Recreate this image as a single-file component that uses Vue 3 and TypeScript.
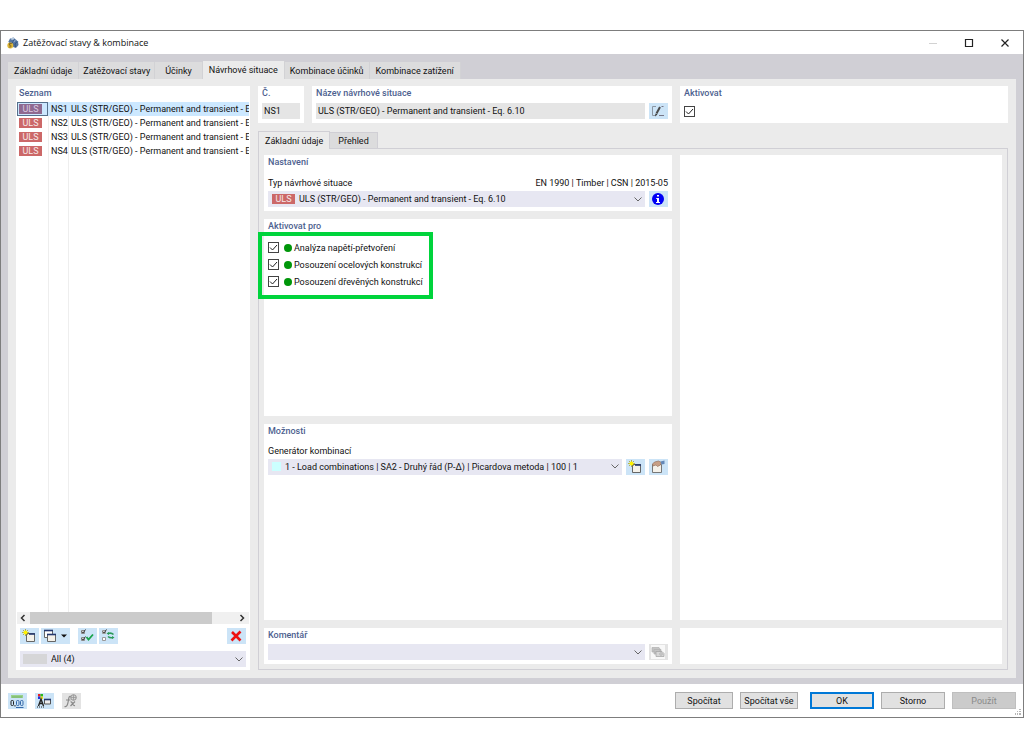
<script setup lang="ts">
import { ref } from 'vue'

interface Situation {
  id: string
  name: string
}

const tabs = ['Základní údaje', 'Zatěžovací stavy', 'Účinky', 'Návrhové situace', 'Kombinace účinků', 'Kombinace zatížení']
const activeTab = ref(3)
const innerTabs = ['Základní údaje', 'Přehled']
const activeInner = ref(0)

const base = 'ULS (STR/GEO) - Permanent and transient - Eq. 6.10'
const situations: Situation[] = ['NS1', 'NS2', 'NS3', 'NS4'].map((id) => ({ id, name: base.slice(0, 43) }))
const selected = ref('NS1')

const active = ref(true)
const designs = ref([
  { label: 'Analýza napětí-přetvoření', on: true },
  { label: 'Posouzení ocelových konstrukcí', on: true },
  { label: 'Posouzení dřevěných konstrukcí', on: true },
])
</script>

<template>
  <div class="desktop">
    <main class="window">
      <header class="titlebar">
        <svg class="app-icon" viewBox="0 0 12 12" aria-hidden="true">
          <path d="M1.500 4.500 3 1.500 6.500 .500 11 4.500 11.500 8 9.500 10.500 7 10.500 2.500 7z" fill="#54759f" />
          <path d="M3 1.500 6.500 .500 8 2 5 3z" fill="#b9cce2" />
          <path d="M7.500 2.500 5.500 5.500 6 9M10 4.500 8 7 8.500 10.500" fill="none" stroke="#2f4d7c" stroke-width=".900" />
          <path d="M8.500 2.800 6.700 5.200" stroke="#9db8d8" stroke-width=".900" />
          <circle cx="3.300" cy="8.400" r="3" fill="#dfb93a" />
          <path d="M4.800 6.600H2.400V8.200C4.800 7.900 4.900 10.200 2.200 10" fill="none" stroke="#75591a" stroke-width=".900" />
        </svg>
        <h1>Zatěžovací stavy &amp; kombinace</h1>
        <div class="caption">
          <button type="button" aria-label="Minimalizovat" disabled>
            <svg viewBox="0 0 10 10"><path d="M1 5.500H9" stroke="#d2d2d2" /></svg>
          </button>
          <button type="button" aria-label="Maximalizovat">
            <svg viewBox="0 0 10 10"><path d="M1.500 1.500H8.500V8.500H1.500z" fill="none" stroke="#222" stroke-width="1.200" /></svg>
          </button>
          <button type="button" aria-label="Zavřít">
            <svg viewBox="0 0 10 10"><path d="M1.500 1.500 8.500 8.500M8.500 1.500 1.500 8.500" stroke="#222" stroke-width="1.200" /></svg>
          </button>
        </div>
      </header>

      <section class="body">
        <div class="tabs" role="tablist">
          <button
            v-for="(t, i) in tabs" :key="t" type="button" role="tab"
            :aria-selected="i === activeTab" :class="{ on: i === activeTab }" @click="activeTab = i"
          >{{ t }}</button>
        </div>

        <div class="page">
          <aside class="panel list">
            <h2>Seznam</h2>
            <div class="rows">
              <table aria-label="Seznam">
                <tbody>
                  <tr v-for="s in situations" :key="s.id" :class="{ sel: s.id === selected }" @click="selected = s.id">
                    <td class="c-badge"><span class="badge">ULS</span></td>
                    <td class="c-id">{{ s.id }}</td>
                    <td class="c-name">{{ s.name }}</td>
                  </tr>
                </tbody>
              </table>
            </div>
            <div class="scroll">
              <svg viewBox="0 0 6 8"><path d="M4.500 1 1.500 4 4.500 7" fill="none" stroke="#333" stroke-width="1.500" /></svg>
              <div class="track"><div class="thumb"></div></div>
              <svg viewBox="0 0 6 8"><path d="M1.500 1 4.500 4 1.500 7" fill="none" stroke="#333" stroke-width="1.500" /></svg>
            </div>
            <div class="tools">
              <button type="button" class="tool" aria-label="Nový">
                <svg viewBox="0 0 14 14">
                  <path d="M4.500 4.500H12.500V12.500H4.500z" fill="#f4f1ea" stroke="#666" />
                  <path d="M7 5H13" stroke="#24386f" stroke-width="1.600" />
                  <path d="M3.500 0V7M0 3.500H7M1 1 6 6M6 1 1 6" stroke="#a89f2a" stroke-width=".800" />
                  <circle cx="3.500" cy="3.500" r="2" fill="#fff200" />
                </svg>
              </button>
              <button type="button" class="tool wide" aria-label="Kopírovat">
                <svg viewBox="0 0 14 14">
                  <path d="M1.500 1.500H9.500V8.500H1.500z" fill="#fff" stroke="#666" />
                  <path d="M1 1.500H10" stroke="#24386f" stroke-width="1.600" />
                  <path d="M4.500 5.500H12.500V12.500H4.500z" fill="#f4f1ea" stroke="#666" />
                  <path d="M4 5.500H13" stroke="#24386f" stroke-width="1.600" />
                </svg>
                <svg class="drop" viewBox="0 0 6 4"><path d="M0 .500H6L3 3.500z" fill="#111" /></svg>
              </button>
              <button type="button" class="tool gap" aria-label="Vybrat vše">
                <svg viewBox="0 0 14 14">
                  <path d="M1.500 1.500H4.500V4.500H1.500zM1.500 8.500H4.500V11.500H1.500z" fill="#fff" stroke="#888" />
                  <path d="M2 2.500 3 4 5.500 .500M2 9.500 3 11 5.500 7.500" fill="none" stroke="#333" />
                  <path d="M6.500 8 8.500 10.500 13 5.500" fill="none" stroke="#18a34a" stroke-width="1.800" />
                </svg>
              </button>
              <button type="button" class="tool" aria-label="Obrátit výběr">
                <svg viewBox="0 0 14 14">
                  <path d="M1.500 1.500H4.500V4.500H1.500zM1.500 8.500H4.500V11.500H1.500z" fill="#fff" stroke="#999" />
                  <path d="M2 2.500 3 4 5.500 .500" fill="none" stroke="#333" />
                  <path d="M5.500 4.500 8 3V6zM13.500 8.500 11 7V10z" fill="#2a9a58" />
                  <path d="M7 4.500C9 3.800 11 4 12.500 5.500M12 8.500C10.500 9 8.500 8.800 7 7.500" fill="none" stroke="#2a9a58" stroke-width="1.600" />
                </svg>
              </button>
              <button type="button" class="tool end" aria-label="Odstranit">
                <svg viewBox="0 0 14 14"><path d="M3 3 11.500 11.500M11.500 2.500 2.500 11.500" stroke="#ee1111" stroke-width="2.600" /></svg>
              </button>
            </div>
            <div class="combo filter">
              <span class="swatch"></span>
              <select aria-label="Filtr"><option>All (4)</option></select>
              <svg class="chev" viewBox="0 0 8 5"><path d="M.500 .500 4 4 7.500 .500" fill="none" stroke="#666" /></svg>
            </div>
          </aside>

          <div class="detail">
            <div class="head">
              <div class="head-left">
                <div class="panel num">
                  <label for="no">Č.</label>
                  <input id="no" type="text" readonly :value="selected" />
                </div>
                <div class="panel title">
                  <label for="nm">Název návrhové situace</label>
                  <div class="line">
                    <input id="nm" type="text" readonly :value="base" />
                    <button type="button" class="tool" aria-label="Upravit název">
                      <svg viewBox="0 0 14 14">
                        <path d="M5 2.500H1.500V11.500H4" fill="none" stroke="#8b96a3" />
                        <path d="M5.500 9.500 9 3" stroke="#4a4a4a" stroke-width="2" />
                        <path d="M4 12.500 4.500 9.500 6.500 10.500z" fill="#333" />
                        <path d="M8 11.500H13M10.500 2.500H12.500" stroke="#778" />
                      </svg>
                    </button>
                  </div>
                </div>
              </div>
              <div class="panel">
                <label for="act">Aktivovat</label>
                <span class="check solo">
                  <input id="act" v-model="active" type="checkbox" />
                  <svg v-show="active" viewBox="0 0 11 11"><path d="M2 5.500 4.500 8 9 3" fill="none" stroke="#222" /></svg>
                </span>
              </div>
            </div>

            <div class="inner-tabs" role="tablist">
              <button
                v-for="(t, i) in innerTabs" :key="t" type="button" role="tab"
                :aria-selected="i === activeInner" :class="{ on: i === activeInner }" @click="activeInner = i"
              >{{ t }}</button>
            </div>

            <div class="inner">
              <section class="panel settings">
                <h2>Nastavení</h2>
                <div class="caption-line">
                  <label for="type">Typ návrhové situace</label>
                  <span>EN 1990 | Timber | CSN | 2015-05</span>
                </div>
                <div class="line">
                  <div class="combo type">
                    <span class="badge">ULS</span>
                    <select id="type"><option>{{ base }}</option></select>
                    <svg class="chev" viewBox="0 0 8 5"><path d="M.500 .500 4 4 7.500 .500" fill="none" stroke="#666" /></svg>
                  </div>
                  <button type="button" class="tool" aria-label="Informace">
                    <svg viewBox="0 0 14 14">
                      <circle cx="7" cy="7" r="6" fill="#0000f5" />
                      <path d="M6 3H8V4.600H6zM5.200 6H8V10H9V11H5V10H6V7H5.200z" fill="#fff" />
                    </svg>
                  </button>
                </div>
              </section>

              <section class="panel designs">
                <h2>Aktivovat pro</h2>
                <ul>
                  <li v-for="(d, i) in designs" :key="d.label">
                    <span class="check">
                      <input :id="'d' + i" v-model="d.on" type="checkbox" />
                      <svg v-show="d.on" viewBox="0 0 11 11"><path d="M2 5.500 4.500 8 9 3" fill="none" stroke="#222" /></svg>
                    </span>
                    <span class="dot"></span>
                    <label :for="'d' + i">{{ d.label }}</label>
                  </li>
                </ul>
                <div class="highlight"></div>
              </section>

              <section class="panel options">
                <h2>Možnosti</h2>
                <div class="caption-line"><label for="gen">Generátor kombinací</label></div>
                <div class="line">
                  <div class="combo gen">
                    <span class="swatch"></span>
                    <select id="gen"><option>1 - Load combinations | SA2 - Druhý řád (P-Δ) | Picardova metoda | 100 | 1</option></select>
                    <svg class="chev" viewBox="0 0 8 5"><path d="M.500 .500 4 4 7.500 .500" fill="none" stroke="#666" /></svg>
                  </div>
                  <button type="button" class="tool" aria-label="Nový generátor">
                    <svg viewBox="0 0 14 14">
                      <path d="M4.500 4.500H12.500V12.500H4.500z" fill="#f4f1ea" stroke="#666" />
                      <path d="M7 5H13" stroke="#24386f" stroke-width="1.600" />
                      <path d="M3.500 0V7M0 3.500H7M1 1 6 6M6 1 1 6" stroke="#a89f2a" stroke-width=".800" />
                      <circle cx="3.500" cy="3.500" r="2" fill="#fff200" />
                    </svg>
                  </button>
                  <button type="button" class="tool" aria-label="Upravit generátor">
                    <svg viewBox="0 0 14 14">
                      <path d="M1.500 4.500H10.500V12.500H1.500z" fill="#f4f1ea" stroke="#777" />
                      <path d="M1.500 4 3.500 2 7.500 1 10.500 2.500 9.500 5 6.500 6.500 5 5 2 6z" fill="#c79f86" stroke="#8c6a58" stroke-width=".600" />
                      <path d="M9.500 1.500 13.500 .500V4L10.500 4.500z" fill="#6488b8" />
                    </svg>
                  </button>
                </div>
              </section>

              <section class="panel comment">
                <h2><label for="cm">Komentář</label></h2>
                <div class="line">
                  <div class="combo">
                    <select id="cm"><option></option></select>
                    <svg class="chev" viewBox="0 0 8 5"><path d="M.500 .500 4 4 7.500 .500" fill="none" stroke="#666" /></svg>
                  </div>
                  <button type="button" class="tool off" aria-label="Komentáře" disabled>
                    <svg viewBox="0 0 14 14">
                      <path d="M0 0H14V14H0z" fill="#f8f8f8" />
                      <path d="M1 2.500H8L9 4V7H1zM3 4.500H10V9H3z" fill="#c4c4c4" stroke="#b0b0b0" stroke-width=".700" />
                      <path d="M5 6.500H11L13 8.500V11.500H5z" fill="#d6d6d6" stroke="#a0a0a0" stroke-width=".700" />
                      <circle cx="10" cy="9" r="1.200" fill="#eee" stroke="#999" stroke-width=".700" />
                    </svg>
                  </button>
                </div>
              </section>

              <div class="panel side-main"></div>
              <div class="panel side-foot"></div>
            </div>
          </div>
        </div>
      </section>

      <footer class="footer">
        <button type="button" class="tool" aria-label="Jednotky">
          <svg viewBox="0 0 14 14">
            <path d="M1 1H13V4H1z" fill="#9ad28b" />
            <path d="M3 2V4M5 2V4M7 2V4M9 2V4M11 2V4" stroke="#5b9a50" stroke-width=".600" />
            <rect x="1" y="6.500" width="2.500" height="5" rx="1" fill="none" stroke="#222" />
            <path d="M5 11V12.500" stroke="#222" />
            <rect x="6.500" y="6.500" width="2.500" height="5" rx="1" fill="none" stroke="#3568a8" />
            <rect x="10.500" y="6.500" width="2.500" height="5" rx="1" fill="none" stroke="#3568a8" />
            <path d="M6 13.500H13.500" stroke="#3568a8" />
          </svg>
        </button>
        <button type="button" class="tool" aria-label="Zobrazení">
          <svg viewBox="0 0 14 14">
            <path d="M1 0H3.500V2.500H1z" fill="#e22" /><path d="M3.500 0H6V2.500H3.500z" fill="#2b2" />
            <path d="M1 2.500H3.500V5H1z" fill="#23d" /><path d="M3.500 2.500H6V5H3.500z" fill="#ed2" />
            <path d="M1.500 12 4 5 6.500 12M2.500 9.500H5.500" fill="none" stroke="#222" stroke-width="1.400" />
            <path d="M0 13H8" stroke="#222" stroke-dasharray="1 1" />
            <path d="M7.500 5.500H13.500V10H7.500z" fill="#eee" stroke="#555" />
            <path d="M7 5.500H14" stroke="#24386f" stroke-width="1.600" />
          </svg>
        </button>
        <button type="button" class="tool off" aria-label="Vzorec" disabled>
          <svg viewBox="0 0 14 14">
            <path d="M7 2.500C5 1.500 4.800 4 4.300 7S3 13.500 .500 12.500M2 6H6.500" fill="none" stroke="#888" stroke-width="1.200" />
            <path d="M6.500 8C9 7 8 12.500 11 11.500M11 7.500 6.500 12" fill="none" stroke="#888" stroke-width="1.200" />
            <circle cx="9.500" cy="3.500" r="2.800" fill="#d5d5d5" stroke="#909090" /><path d="M7 3.500H12M9.500 1V6" stroke="#909090" stroke-width=".700" />
          </svg>
        </button>
        <div class="actions">
          <button type="button" class="push small">Spočítat</button>
          <button type="button" class="push small">Spočítat vše</button>
          <button type="button" class="push primary">OK</button>
          <button type="button" class="push">Storno</button>
          <button type="button" class="push" disabled>Použít</button>
        </div>
        <svg class="grip" viewBox="0 0 6 6" aria-hidden="true">
          <path d="M4 0H6V1H4zM2 2H3V3H2zM4 2H6V3H4zM0 4H1V6H0zM2 4H3V6H2zM4 4H6V6H4z" fill="#b5b5b5" />
        </svg>
      </footer>
    </main>
  </div>
</template>

<style>
body {
  margin: 0;
  background: #fff;
}
</style>

<style scoped>
* {
  box-sizing: border-box;
}
.desktop {
  min-height: 100vh;
  display: flex;
  flex-direction: column;
  padding: 30px 0 31px;
  font: 9px/12px Roboto, "Open Sans", sans-serif;
  color: #111;
}
button,
input,
select {
  font: inherit;
  color: inherit;
  margin: 0;
  padding: 0;
  border: 0;
  border-radius: 0;
}
.window {
  flex: 1;
  display: flex;
  flex-direction: column;
  border: 1px solid #7d7d7d;
  background: #fff;
}
.titlebar {
  display: flex;
  align-items: center;
  height: 23px;
  padding-left: 6px;
}
.app-icon {
  width: 12px;
  height: 12px;
  margin-right: 4px;
}
h1 {
  margin: 0;
  font: 400 9px/12px "Open Sans", sans-serif;
}
.caption {
  display: flex;
  margin-left: auto;
}
.caption button {
  width: 36px;
  height: 22px;
  display: grid;
  place-items: center;
  background: none;
}
.caption svg {
  width: 10px;
  height: 10px;
}
.body {
  flex: 1;
  display: flex;
  flex-direction: column;
  padding: 7px 7px 6px;
  background: #d0cfd5;
}
.tabs {
  display: flex;
  align-items: flex-end;
  height: 18px;
}
.tabs button {
  height: 17px;
  padding: 0 6px;
  background: #dcdcdd;
  border-right: 1px solid #d2d2d5;
}
.tabs button:nth-child(2) {
  padding: 0 4px;
}
.tabs button:nth-child(3) {
  padding: 0 10px;
}
.tabs button:nth-child(5) {
  padding: 0 5px;
}
.tabs .on {
  height: 18px;
  background: #ebebeb;
}
.page {
  flex: 1;
  display: flex;
  gap: 8px;
  padding: 7px 8px 8px;
  background: #ebebeb;
}
.panel {
  background: #fff;
  padding: 1px 4px 4px;
  min-width: 0;
}
h2,
.head label {
  display: block;
  margin: 0;
  font-size: 9px;
  line-height: 12px;
  font-weight: 500;
  color: #4d5f8f;
}
.list {
  flex: none;
  width: 234px;
  display: flex;
  flex-direction: column;
  padding: 1px 1px 3px;
}
.list h2 {
  padding: 0 2px 3px;
}
.rows {
  flex: 1;
  overflow: hidden;
  background:
    linear-gradient(#eee, #eee) 31px 0 / 1px 100% no-repeat,
    linear-gradient(#eee, #eee) 51px 0 / 1px 100% no-repeat;
}
table {
  width: 100%;
  table-layout: fixed;
  border-collapse: collapse;
}
td {
  height: 14px;
  padding: 0;
  line-height: 14px;
  white-space: nowrap;
  overflow: hidden;
}
.c-badge {
  width: 31px;
}
.c-id {
  width: 22px;
  padding-left: 3px;
}
.c-name {
  padding-left: 1px;
}
.c-badge .badge {
  margin-left: 2px;
}
.badge {
  display: block;
  width: 23px;
  height: 10px;
  background: #cc6868;
  color: #f6e8e8;
  line-height: 10px;
  text-align: center;
}
.sel {
  background: #cce8ff;
}
.sel .c-badge {
  outline: 1px solid #56708c;
  outline-offset: -1px;
}
.sel .badge {
  background: #8f6a90;
  color: #d9c9e0;
}
.scroll {
  display: flex;
  align-items: center;
  height: 12px;
  padding: 0 4px 0 3px;
  gap: 4px;
  background: #f0f0f0;
}
.scroll svg {
  width: 6px;
  height: 8px;
}
.track {
  flex: 1;
}
.thumb {
  width: 89%;
  height: 12px;
  background: #cbcbcb;
}
.tools {
  display: flex;
  gap: 2px;
  padding: 4px 3px 7px;
}
.tool {
  flex: none;
  width: 19px;
  height: 16px;
  display: flex;
  align-items: center;
  justify-content: center;
  padding-right: 1px;
  background: #cce4f7;
}
.tool svg {
  width: 14px;
  height: 14px;
}
.tool.wide {
  width: 29px;
  gap: 4px;
}
.tool .drop {
  width: 6px;
  height: 4px;
}
.tool.gap {
  margin-left: 6px;
}
.tool.end {
  margin-left: auto;
}
.tool.off {
  background: #e3e3e3;
}
.combo {
  flex: 1;
  min-width: 0;
  display: grid;
  align-items: center;
  height: 16px;
  background: #e7e7f2;
}
.combo > * {
  grid-area: 1 / 1;
}
.combo select {
  width: 100%;
  height: 16px;
  padding: 0 20px 0 31px;
  appearance: none;
  background: transparent;
}
.combo .chev {
  justify-self: end;
  width: 8px;
  height: 5px;
  margin-right: 3px;
  pointer-events: none;
}
.filter {
  flex: none;
  margin: 0 3px;
}
.filter .swatch {
  width: 24px;
  height: 10px;
  margin-left: 3px;
  background: #d6d6d8;
}
.type .badge {
  margin-left: 4px;
}
.gen .swatch {
  width: 9px;
  height: 9px;
  margin-left: 4px;
  background: #ccffff;
}
.combo.gen select {
  padding-left: 17px;
}
.detail {
  flex: 1;
  min-width: 0;
  display: flex;
  flex-direction: column;
}
.head {
  display: grid;
  grid-template-columns: minmax(0, 414fr) minmax(0, 328fr);
  gap: 8px;
}
.head-left {
  display: flex;
  gap: 8px;
}
.num {
  width: 46px;
}
.title {
  flex: 1;
}
.head input[type='text'] {
  display: block;
  flex: 1;
  width: 100%;
  min-width: 0;
  height: 16px;
  padding: 0 2px;
  background: #e5e5e5;
}
.head label {
  margin-bottom: 4px;
}
.line {
  display: flex;
  gap: 4px;
}
.check {
  display: grid;
  flex: none;
  width: 11px;
  height: 11px;
}
.check > * {
  grid-area: 1 / 1;
}
.check input {
  width: 11px;
  height: 11px;
  appearance: none;
  border: 1px solid #444;
  background: #fff;
}
.check svg {
  width: 11px;
  height: 11px;
  pointer-events: none;
}
.check.solo {
  margin-top: 7px;
}
.inner-tabs {
  display: flex;
  align-items: flex-end;
  height: 17px;
  margin-top: 8px;
}
.inner-tabs button {
  height: 16px;
  padding: 0 8px;
  border: solid #d0cfd5;
  border-width: 1px 1px 0 0;
  background: #dcdcdd;
}
.inner-tabs .on {
  height: 18px;
  margin-bottom: -1px;
  padding: 0 6px;
  border-left-width: 1px;
  background: #ebebeb;
  z-index: 1;
}
.inner {
  flex: 1;
  display: grid;
  grid-template-columns: minmax(0, 408fr) minmax(0, 322fr);
  grid-template-rows: auto 1fr 1fr auto;
  gap: 8px;
  padding: 6px 5px 5px;
  border: 1px solid #d0cfd5;
}
.settings {
  grid-area: 1 / 1;
}
.designs {
  grid-area: 2 / 1;
  position: relative;
}
.options {
  grid-area: 3 / 1;
}
.comment {
  grid-area: 4 / 1;
}
.comment h2 {
  margin-bottom: 3px;
}
.side-main {
  grid-area: 1 / 2 / 4 / 3;
}
.side-foot {
  grid-area: 4 / 2;
}
.caption-line {
  display: flex;
  justify-content: space-between;
  margin: 9px 0 2px;
}
.options .caption-line {
  margin-top: 8px;
}
ul {
  list-style: none;
  margin: 7px 0 0;
  padding: 0;
}
li {
  display: flex;
  align-items: center;
  height: 17px;
}
.dot {
  width: 8px;
  height: 8px;
  margin: 0 2px 0 5px;
  border-radius: 50%;
  background: #00960a;
}
.highlight {
  position: absolute;
  left: -6px;
  top: 13px;
  width: 175px;
  height: 67px;
  border: 4px solid #00d43c;
  pointer-events: none;
}
.footer {
  position: relative;
  display: flex;
  align-items: center;
  gap: 8px;
  height: 33px;
  padding: 0 7px;
}
.actions {
  display: flex;
  gap: 7px;
  margin-left: auto;
}
.push {
  width: 64px;
  height: 17px;
  border: 1px solid #adadad;
  background: #e1e1e1;
  line-height: 14px;
  white-space: nowrap;
}
.push.small {
  width: 58px;
}
.push.primary {
  margin-left: 5px;
  border: 2px solid #0078d7;
}
.push:disabled {
  background: #cbcbcb;
  border-color: #bfbfbf;
  color: #8a8a8a;
}
.grip {
  position: absolute;
  right: 2px;
  bottom: 2px;
  width: 6px;
  height: 6px;
}
</style>
